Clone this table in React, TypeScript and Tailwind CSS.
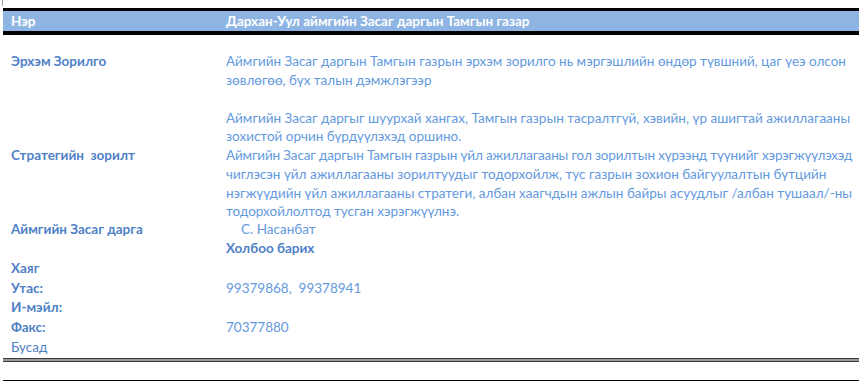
const label = "font-bold text-[#4f81c7]";
const body = "text-[#6499de]";

function Row({ name, children, bold = true }: { name?: string; children?: React.ReactNode; bold?: boolean }) {
  return (
    <div className="flex h-[19.7px] items-center leading-[19.7px]">
      <div className={`w-[215px] shrink-0 ${bold ? label : "text-[#4f81c7]"}`}>{name}</div>
      <div className={body}>{children}</div>
    </div>
  );
}

export default function App() {
  return (
    <div
      className="relative h-[383px] w-[868px] overflow-hidden whitespace-nowrap bg-white text-[13.5px]"
      style={{ fontFamily: "Lato, 'Open Sans', sans-serif" }}
    >
      <div className="absolute left-[2px] top-0 h-[6px] w-px bg-gray-400" />

      <div className="pt-[8px] pl-[3px]">
        {/* header band */}
        <div className="flex h-[27px] w-[856px] items-center border-t-[3px] border-b-4 border-black bg-[#8db4e2] pl-[8px] font-bold text-white">
          <div className="w-[215px]">Нэр</div>
          <div>Дархан-Уул аймгийн Засаг даргын Тамгын газар</div>
        </div>

        <div className="pl-[8px]">
          <div className="mt-[17px] flex leading-[18.7px]">
            <div className={`w-[215px] shrink-0 ${label}`}>Эрхэм Зорилго</div>
            <div className={body}>
              <div>Аймгийн Засаг даргын Тамгын газрын эрхэм зорилго нь мэргэшлийн өндөр түвшний, цаг үеэ олсон</div>
              <div>зөвлөгөө, бүх талын дэмжлэгээр</div>
            </div>
          </div>

          <div className="mt-[19.3px] flex leading-[18.7px]">
            <div className="w-[215px] shrink-0" />
            <div className={body}>
              <div>Аймгийн Засаг даргыг шуурхай хангах, Тамгын газрын тасралтгүй, хэвийн, үр ашигтай ажиллагааны</div>
              <div>зохистой орчин бүрдүүлэхэд оршино.</div>
            </div>
          </div>

          <div className="flex leading-[18.7px]">
            <div className={`w-[215px] shrink-0 whitespace-pre ${label}`}>Стратегийн  зорилт</div>
            <div className={body}>
              <div className="tracking-[-0.15px]">
                Аймгийн Засаг даргын Тамгын газрын үйл ажиллагааны гол зорилтын хүрээнд түүнийг хэрэгжүүлэхэд
              </div>
              <div>чиглэсэн үйл ажиллагааны зорилтуудыг тодорхойлж, тус газрын зохион байгуулалтын бүтцийн</div>
              <div>нэгжүүдийн үйл ажиллагааны стратеги, албан хаагчдын ажлын байры асуудлыг /албан тушаал/-ны</div>
              <div>тодорхойлолтод тусган хэрэгжүүлнэ.</div>
            </div>
          </div>

          <div className="-mt-[1.3px]">
            <Row name="Аймгийн Засаг  дарга">
              <span className="pl-[15px]">С. Насанбат</span>
            </Row>
            <Row>
              <span className={label}>Холбоо барих</span>
            </Row>
            <Row name="Хаяг" />
            <Row name="Утас:">
              <span className="whitespace-pre">99379868,  99378941</span>
            </Row>
            <Row name="И-мэйл:" />
            <Row name="Факс:">70377880</Row>
            <Row name="Бусад" bold={false} />
          </div>
        </div>

        {/* closing rules */}
        <div className="mt-[0.6px] h-[4px] w-[856px] border-y border-[#3a3a3a] bg-[#9a9a9a]" />
        <div className="mt-[18px] h-px w-[856px] bg-black" />
      </div>
    </div>
  );
}
